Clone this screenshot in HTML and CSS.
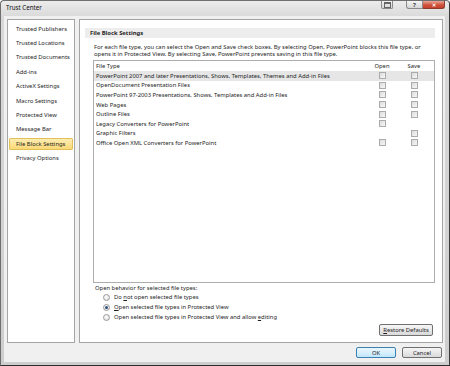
FILE: index.html
```html
<!DOCTYPE html>
<html lang="en">
<head>
    <meta charset="UTF-8">
    <title>Trust Center</title>
    <link rel="stylesheet" href="styles.css">
</head>
<body>
    <div class="window">
        <div class="titlebar">
            <span class="title">Trust Center</span>
            <div class="caption-buttons">
                <span class="cap-btn cap-box"><span class="box-icon"></span></span>
                <span class="cap-btn cap-help">?</span>
                <span class="cap-btn cap-close">&#x2715;</span>
            </div>
        </div>
        <div class="client">
            <div class="main">
                <ul class="nav">
                    <li>Trusted Publishers</li>
                    <li>Trusted Locations</li>
                    <li>Trusted Documents</li>
                    <li>Add-ins</li>
                    <li>ActiveX Settings</li>
                    <li>Macro Settings</li>
                    <li>Protected View</li>
                    <li>Message Bar</li>
                    <li class="selected">File Block Settings</li>
                    <li>Privacy Options</li>
                </ul>
                <div class="panel">
                    <div class="section-head">File Block Settings</div>
                    <div class="section-body">
                        <p class="desc">For each file type, you can select the Open and Save check boxes. By selecting Open, PowerPoint blocks this file type, or<br>opens it in Protected View. By selecting Save, PowerPoint prevents saving in this file type.</p>
                        <div class="table">
                            <div class="row head">
                                <span>File Type</span>
                                <span class="col">Open</span>
                                <span class="col">Save</span>
                            </div>
                            <div class="row hot">
                                <span>PowerPoint 2007 and later Presentations, Shows, Templates, Themes and Add-in Files</span>
                                <span class="col"><i class="check"></i></span>
                                <span class="col"><i class="check"></i></span>
                            </div>
                            <div class="row">
                                <span>OpenDocument Presentation Files</span>
                                <span class="col"><i class="check"></i></span>
                                <span class="col"><i class="check"></i></span>
                            </div>
                            <div class="row">
                                <span>PowerPoint 97-2003 Presentations, Shows, Templates and Add-in Files</span>
                                <span class="col"><i class="check"></i></span>
                                <span class="col"><i class="check"></i></span>
                            </div>
                            <div class="row">
                                <span>Web Pages</span>
                                <span class="col"><i class="check"></i></span>
                                <span class="col"><i class="check"></i></span>
                            </div>
                            <div class="row">
                                <span>Outline Files</span>
                                <span class="col"><i class="check"></i></span>
                                <span class="col"><i class="check"></i></span>
                            </div>
                            <div class="row">
                                <span>Legacy Converters for PowerPoint</span>
                                <span class="col"><i class="check"></i></span>
                                <span class="col"></span>
                            </div>
                            <div class="row">
                                <span>Graphic Filters</span>
                                <span class="col"></span>
                                <span class="col"><i class="check"></i></span>
                            </div>
                            <div class="row">
                                <span>Office Open XML Converters for PowerPoint</span>
                                <span class="col"><i class="check"></i></span>
                                <span class="col"><i class="check"></i></span>
                            </div>
                        </div>
                        <div class="behavior">Open behavior for selected file types:</div>
                        <div class="radios">
                            <label class="radio"><i class="dot"></i><span>Do <u>n</u>ot open selected file types</span></label>
                            <label class="radio"><i class="dot on"></i><span><u>O</u>pen selected file types in Protected View</span></label>
                            <label class="radio"><i class="dot"></i><span>Open selected file types in Protected View and allow <u>e</u>diting</span></label>
                        </div>
                        <div class="restore-row">
                            <span class="btn restore"><span><u>R</u>estore Defaults</span></span>
                        </div>
                    </div>
                </div>
            </div>
            <div class="footer">
                <span class="btn default">OK</span>
                <span class="btn">Cancel</span>
            </div>
        </div>
    </div>
</body>
</html>
```

FILE: styles.css
```css
body {
    margin: 0;
    font-family: "Noto Sans", "Open Sans", sans-serif;
    font-size: 5.85px;
    color: #1e1e1e;
}
.window {
    width: 450px;
    height: 366px;
    box-sizing: border-box;
    display: flex;
    flex-direction: column;
    padding: 0 4px 3px 3px;
    border: 1px solid #6e6e6e;
    border-right-color: #3c3c3c;
    border-bottom-color: #2e2e2e;
    border-radius: 4px 4px 0 0;
    background: linear-gradient(#ececec, #d9d9d9 16px, #cdcdcd);
}
.titlebar {
    height: 15px;
    display: flex;
    justify-content: space-between;
}
.title {
    padding: 3px 0 0 2px;
    line-height: 7px;
    font-size: 6.2px;
    color: #111;
}
.caption-buttons {
    display: flex;
}
.cap-btn {
    height: 8px;
    box-sizing: border-box;
    border: 1px solid #8a8a8a;
    border-top: none;
    display: flex;
    align-items: center;
    justify-content: center;
    font-size: 6px;
    line-height: 6px;
    color: #333;
    background: linear-gradient(#f4f4f4, #d6d6d6);
}
.cap-box {
    width: 12px;
    margin-right: 13px;
    border-radius: 0 0 2px 2px;
}
.box-icon {
    width: 5px;
    height: 3px;
    border: 1px solid #666;
    border-top-width: 2px;
}
.cap-help {
    width: 17px;
    border-radius: 0 0 0 3px;
    font-weight: bold;
}
.cap-close {
    width: 22px;
    border-color: #8b3a2c;
    border-left: none;
    border-radius: 0 0 3px 0;
    color: #fff;
    font-weight: bold;
    font-size: 5px;
    background: linear-gradient(#e9a799, #d0533c 55%, #c3402b);
}
.client {
    flex: 1;
    display: flex;
    flex-direction: column;
    background: #f0f0f0;
    padding: 3px 2px 0 3px;
}
.main {
    height: 324px;
    display: flex;
    gap: 4px;
}
.nav {
    width: 68px;
    margin: 0;
    padding: 2.7px 1px 0;
    list-style: none;
    background: #fff;
    border: 1px solid #a5a5a5;
    box-sizing: border-box;
}
.nav li {
    height: 12px;
    margin-bottom: 2.4px;
    padding-left: 6px;
    line-height: 10px;
    border: 1px solid transparent;
    box-sizing: border-box;
    white-space: nowrap;
}
.nav li.selected {
    border-color: #e3bf5a;
    border-radius: 1px;
    background: linear-gradient(#fdedb2, #fbd976);
}
.panel {
    flex: 1;
    background: #fff;
    border: 1px solid #a5a5a5;
    padding: 8px 7px 0 5px;
}
.section-head {
    height: 10px;
    line-height: 10px;
    padding-left: 5px;
    font-weight: bold;
    background: #ededed;
}
.section-body {
    padding-left: 8px;
}
.desc {
    margin: 5.8px 0 0;
    padding-left: 1px;
    line-height: 7px;
    white-space: nowrap;
}
.table {
    margin-top: 2.2px;
    height: 223px;
    box-sizing: border-box;
    border: 1px solid #adadad;
}
.row {
    height: 9.6px;
    display: grid;
    grid-template-columns: 1fr 32px 32px;
    padding: 0 4px 0 2px;
    align-items: center;
    white-space: nowrap;
}
.row.head {
    height: 10px;
}
.row.hot {
    background: #e6e6e6;
}
.col {
    display: flex;
    justify-content: center;
}
.check {
    width: 7px;
    height: 7px;
    box-sizing: border-box;
    border: 1px solid #ababab;
    background: linear-gradient(135deg, #dcdcdc, #f7f7f7);
}
.behavior {
    margin-top: 2.5px;
    padding-left: 2px;
    line-height: 7px;
}
.radios {
    display: flex;
    flex-direction: column;
    padding-left: 10px;
}
.radio {
    height: 10px;
    display: flex;
    align-items: center;
    gap: 4px;
}
.dot {
    width: 7px;
    height: 7px;
    box-sizing: border-box;
    border: 1px solid #9a9a9a;
    border-radius: 50%;
    background: radial-gradient(circle at 40% 40%, #ffffff, #d8d8d8);
    display: flex;
    align-items: center;
    justify-content: center;
}
.dot.on::after {
    content: "";
    width: 3px;
    height: 3px;
    border-radius: 50%;
    background: #2c4f7a;
}
.restore-row {
    display: flex;
    justify-content: flex-end;
    margin-top: 1.5px;
    padding-right: 2px;
}
.btn {
    height: 12px;
    box-sizing: border-box;
    display: flex;
    align-items: center;
    justify-content: center;
    border: 1px solid #707070;
    border-radius: 2px;
    background: linear-gradient(#f6f6f6, #e8e8e8 50%, #d9d9d9);
}
.restore {
    width: 54px;
}
.footer {
    display: flex;
    justify-content: flex-end;
    gap: 6px;
    padding: 4px 1px 0 0;
}
.footer .btn {
    width: 40px;
    height: 11px;
}
.footer .btn.default {
    border-color: #3c7fb1;
    background: linear-gradient(#eaf6fd, #d9f0fc 50%, #bee6fd);
}
```
